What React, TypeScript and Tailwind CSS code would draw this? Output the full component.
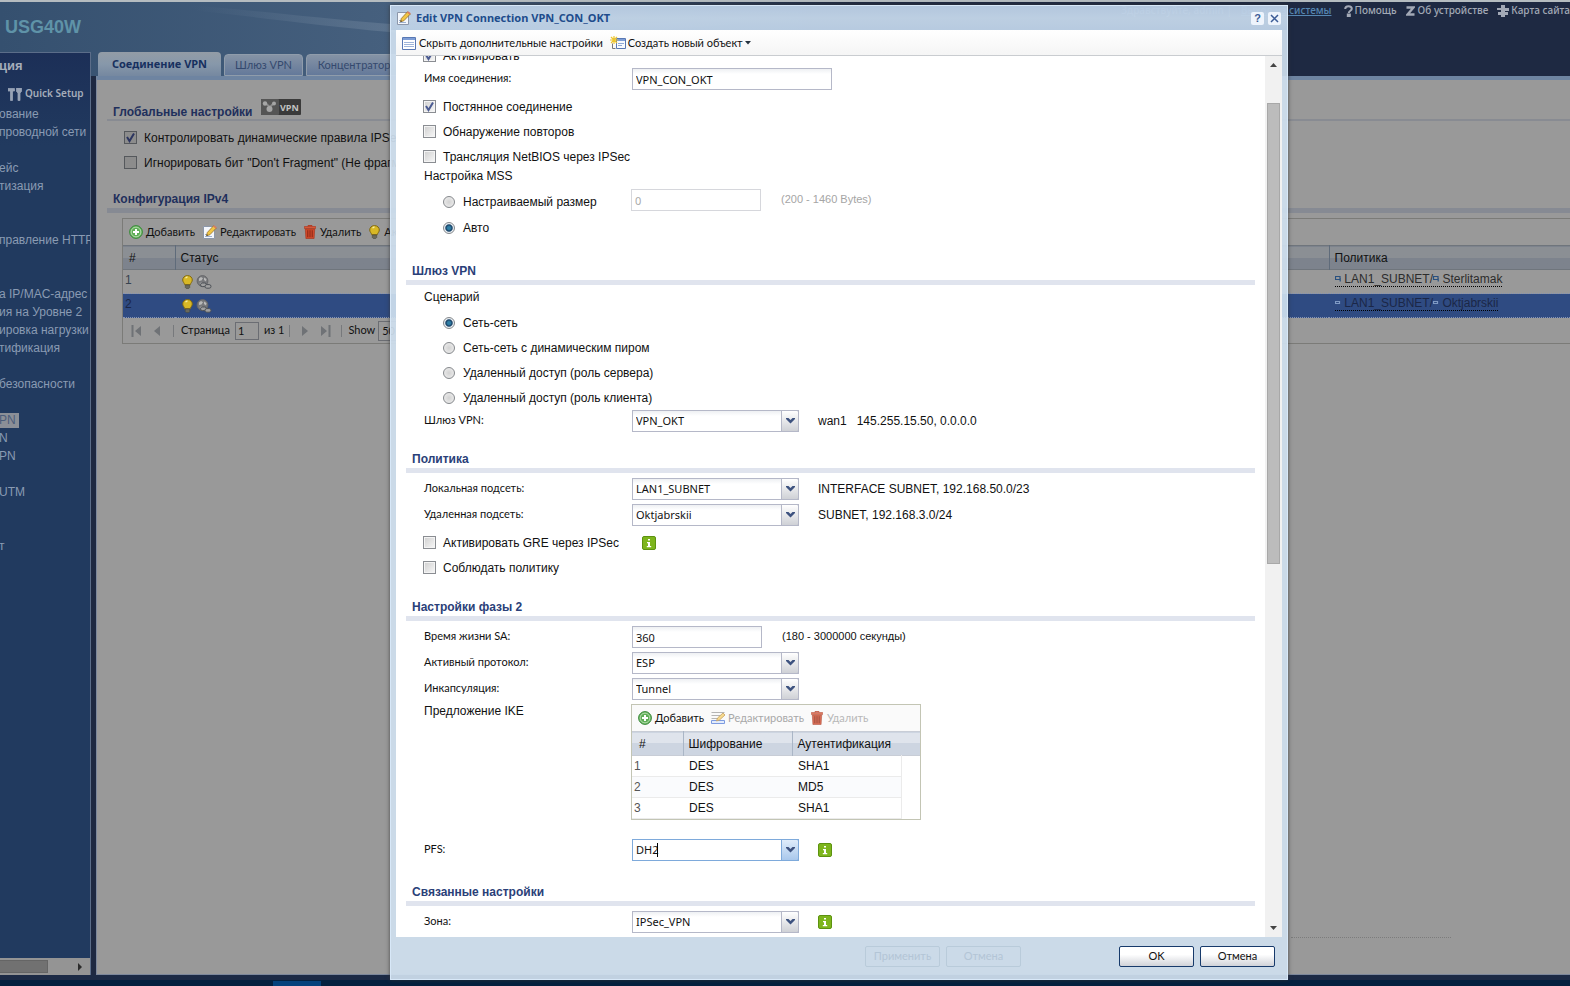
import React from "react";

const caption = "font-['Lato',sans-serif] text-[11px]";
const value = "font-['Noto_Sans',sans-serif] text-[11px]";

const sideItems = [
  "ование", "проводной сети", "", "ейс", "тизация", "", "", "правление HTTP", "", "",
  "а IP/MAC-адрес", "ия на Уровне 2", "ировка нагрузки", "тификация", "", "безопасности",
  "", "PN", "N", "PN", "", "UTM", "", "", "т",
];

function AddIcon() {
  return (
    <svg width="14" height="14" viewBox="0 0 14 14">
      <circle cx="7" cy="7" r="6.4" fill="#5fae57" stroke="#3d8a3d" />
      <circle cx="7" cy="7" r="4.9" fill="none" stroke="#b9e0b2" />
      <path d="M7 4v6M4 7h6" stroke="#fff" strokeWidth="2" />
    </svg>
  );
}

function PencilIcon() {
  return (
    <svg width="14" height="14" viewBox="0 0 14 14">
      <path d="M.5 1.500h11v12H.5z" fill="#f4f7fc" stroke="#8c97aa" />
      <path d="M2 9.500h2M2 11.500h7" stroke="#9db1d0" />
      <path d="M3.500 10.800l.8-3.300L10.500.8l2.800 2.200-6.500 6.800z" fill="#f1c644" stroke="#98702b" strokeWidth=".8" />
      <path d="M3.500 10.800l.4-1.600 1.200 1z" fill="#333" />
      <path d="M10.500.8l2.800 2.200" stroke="#d77c62" strokeWidth="1.600" />
    </svg>
  );
}

function EditRowIcon() {
  return (
    <svg width="15" height="14" viewBox="0 0 15 14">
      <path d="M.5 1.500h13M.5 4.500h9M.5 7.500h7" stroke="#b5b5b5" />
      <path d="M.5 9.500h13v3H.5z" fill="#e3ecfb" stroke="#7d9be0" />
      <path d="M5.500 10l1-3 5.500-5 2 2-5.500 5z" fill="#f6d98c" stroke="#c5a060" strokeWidth=".8" />
    </svg>
  );
}

function TrashIcon() {
  return (
    <svg width="12" height="14" viewBox="0 0 12 14">
      <path d="M4 1.500V.6h4v.9" fill="none" stroke="#b5361c" />
      <path d="M.3 1.500h11.400v2H.3z" fill="#d95638" stroke="#a9361d" strokeWidth=".6" />
      <path d="M1.300 4h9.400l-.6 9.500H1.900z" fill="#d24a2c" stroke="#a2321a" strokeWidth=".6" />
      <path d="M3.800 5.200v7M6 5.200v7M8.200 5.200v7" stroke="#7f2412" strokeWidth=".9" />
    </svg>
  );
}

function BulbIcon() {
  return (
    <svg width="11" height="14" viewBox="0 0 11 14">
      <path d="M5.500.6C2.500.6.7 2.700.7 5c0 2 1.700 2.900 2 4.700h5.600c.3-1.800 2-2.700 2-4.700 0-2.300-1.800-4.400-4.800-4.400z" fill="#d8b826" stroke="#7f6713" />
      <path d="M3.600 3.200C4 2.500 4.700 2.100 5.500 2" stroke="#f7eda0" fill="none" strokeWidth="1.300" />
      <path d="M3.300 10h4.400v2.500l-1 1H4.300l-1-1z" fill="#6a6a5c" stroke="#4b4b40" strokeWidth=".6" />
    </svg>
  );
}

function GlobeLinkIcon() {
  return (
    <svg width="16" height="14" viewBox="0 0 16 14">
      <circle cx="6.500" cy="6" r="5.400" fill="#77787b" stroke="#66676a" />
      <path d="M3 3.500l2-1.500 2 1.200L5.500 5.500 3 6zM8 2.500l2.500 1.500L10 6.500 8 5zM3.500 8l2.500-.5 1 2-1.500 1z" fill="#b9b9b9" />
      <rect x="4.500" y="8" width="6" height="3.600" rx="1.800" fill="#a0a0a0" stroke="#4d5157" />
      <rect x="9" y="9.600" width="6" height="3.600" rx="1.800" fill="#a0a0a0" stroke="#4d5157" />
    </svg>
  );
}

function InfoIcon() {
  return (
    <svg width="14" height="14" viewBox="0 0 14 14">
      <rect x=".5" y=".5" width="13" height="13" rx="1.500" fill="#7db51c" stroke="#5d9210" />
      <path d="M6 3h2v1.600H6zM5 6h3v4h1.200v1.200H4.800V10H6V7.200H5z" fill="#fff" />
    </svg>
  );
}

function HostIcon({ light }: { light?: boolean }) {
  return (
    <svg width="6" height="7" viewBox="0 0 6 7" className="inline">
      <path d={light ? "M.5 1.500h4v2H.5z" : "M.5.5h4.500v3H.5zM5.200 2v3.500"} fill="none" stroke={light ? "#7f9ac4" : "#29507f"} strokeWidth="1.200" />
    </svg>
  );
}

function Check({ label, on, dim }: { label: string; on?: boolean; dim?: boolean }) {
  return (
    <label className="flex h-[25px] items-center gap-[7px] whitespace-nowrap">
      <span className="relative flex">
        <input
          type="checkbox"
          defaultChecked={on}
          className={
            dim
              ? "size-[13px] appearance-none border border-[#55585c] bg-[#8c8c8c]"
              : "size-[13px] appearance-none border border-[#8a8d92] bg-linear-to-br from-[#cfcfcf] to-[#f8f8f8] shadow-[inset_0_0_0_1px_#f4f4f4]"
          }
        />
        {on && (
          <svg className="pointer-events-none absolute inset-0" width="13" height="13" viewBox="0 0 13 13">
            <path d="M3 6l2.500 4L10 2.500" fill="none" stroke={dim ? "#2c3560" : "#4b5b92"} strokeWidth="2" />
          </svg>
        )}
      </span>
      {label}
    </label>
  );
}

function Radio({ name, label, on }: { name: string; label: string; on?: boolean }) {
  return (
    <label className="flex h-[25px] items-center gap-2 pl-5 whitespace-nowrap">
      <input
        type="radio"
        name={name}
        defaultChecked={on}
        className="size-3 appearance-none rounded-full border border-[#85888c] bg-radial from-[#d2d2d2] to-[#f2f2f2] checked:bg-radial checked:from-[#2f7fa6] checked:from-20% checked:via-[#173f63] checked:via-45% checked:to-[#e8eef2] checked:to-60%"
      />
      {label}
    </label>
  );
}

function Section({ title, children, className }: { title: string; children: React.ReactNode; className: string }) {
  return (
    <section className={className}>
      <h2 className="border-b-[5px] border-[#e0e4ee] pl-[6px] leading-[18px] font-bold text-[#2a4078]">{title}</h2>
      <div className="pl-[17px]">{children}</div>
    </section>
  );
}

function Field({ id, label, children }: { id: string; label: string; children: React.ReactNode }) {
  return (
    <div className="flex h-[26px] items-start whitespace-nowrap">
      <label htmlFor={id} className={`${caption} w-[209px] shrink-0 pl-px leading-5`}>
        {label}
      </label>
      {children}
    </div>
  );
}

function Combo({ id, text, focused }: { id: string; text: string; focused?: boolean }) {
  return (
    <span className="relative flex">
      <select
        id={id}
        className={`${value} h-[22px] w-[167px] appearance-none border bg-white pt-px pl-[3px] ${
          focused ? "border-[#7eaadb]" : "border-[#b5b8c8] bg-linear-to-b from-[#eef0f3] to-white to-25%"
        }`}
      >
        <option>{text}</option>
      </select>
      {focused && <span className="absolute top-[4px] left-[25px] h-[14px] w-px bg-black" />}
      <span
        className={`pointer-events-none absolute inset-y-0 right-0 flex w-[18px] items-center justify-center rounded-r-xs border ${
          focused ? "border-[#7eaadb] bg-linear-to-b from-[#dfecfa] to-[#a9c8ec]" : "border-[#b5b8c8] bg-linear-to-b from-white to-[#cfd1d6]"
        }`}
      >
        <svg width="9" height="6" viewBox="0 0 9 6">
          <path d="M0 0h2.500l2 2 2-2H9v1L4.500 5.500 0 1z" fill="#3d527f" />
        </svg>
      </span>
    </span>
  );
}

function TopLinks() {
  return (
    <nav className="flex h-[18px] items-center justify-end gap-[9px] font-['Noto_Sans',sans-serif] text-[10px] font-medium text-[#a3a9b6]">
      <span>Здравствуйте, admin |</span>
      <a href="#logout" className="mr-[3px] text-[#5687b3] underline">
        Выход из системы
      </a>
      <a href="#help" className="flex items-center gap-[2px]">
        <svg width="9" height="12" viewBox="0 0 9 12">
          <path d="M1.200 4C1.200 2 2.500 1.200 4.500 1.200S7.800 2.200 7.800 3.800c0 2-3 2-3 4.200M3.800 9.500h2v2h-2z" fill="none" stroke="currentColor" strokeWidth="2" />
        </svg>
        Помощь
      </a>
      <a href="#about" className="flex items-center gap-[3px]">
        <svg width="9" height="10" viewBox="0 0 9 10">
          <path d="M.5 1.500h7L1.500 8.500h7" fill="none" stroke="currentColor" strokeWidth="2.400" />
        </svg>
        Об устройстве
      </a>
      <a href="#map" className="flex items-center gap-[2px]">
        <svg width="12" height="12" viewBox="0 0 12 12">
          <path d="M4 0h4v3h4v3H8v1h3v3H8v2H4v-2H1V7h3V5H0V3h4z" fill="currentColor" />
        </svg>
        Карта сайта
      </a>
    </nav>
  );
}

function Sidebar() {
  return (
    <aside className="mt-[52px] flex w-[91px] shrink-0 flex-col overflow-hidden border-t border-r border-[#5b6d89] bg-[#213a5f] bg-linear-to-b from-[#1c2f57] to-[#213a5f] to-10% text-[#8a9bb3]">
      <h3 className="-ml-px h-[26px] pt-[3px] text-[13px] leading-5 font-bold text-[#a5adba]">ция</h3>
      <a href="#quick" className="flex h-[26px] items-center gap-[3px] pt-1 pl-2 font-['Noto_Sans',sans-serif] text-[10px] font-semibold whitespace-nowrap text-[#a5adba]">
        <svg width="14" height="14" viewBox="0 0 14 14">
          <path d="M0 1.500h6.500v2.500H0zM2.500 4h2v9.500h-2zM8.500 1v3.500L10 6v7.500h2V6l1.500-1.500V1" fill="#97a2b5" stroke="#97a2b5" strokeWidth=".8" />
        </svg>
        Quick Setup
      </a>
      <ul className="grow whitespace-nowrap">
        {sideItems.map((item, index) => (
          <li key={index} className="-ml-px h-[18px] leading-[18px]">
            <a href="#menu" className={index === 17 ? "bg-[#8b8f97] pr-[3px] pb-px text-[#4c5d7a]" : ""}>
              {item}
            </a>
          </li>
        ))}
      </ul>
      <div className="flex h-[17px] items-center justify-between bg-[#949494] pr-2">
        <span className="h-[13px] w-12 border border-l-0 border-[#656565] bg-[#717171]" />
        <svg width="4" height="8" viewBox="0 0 4 8">
          <path d="M0 0l4 4-4 4z" fill="#2b2b2b" />
        </svg>
      </div>
    </aside>
  );
}

function Pager() {
  return (
    <div className={`${caption} flex h-[26px] items-center gap-[9px] border-b border-[#7b7b78] pl-2 whitespace-nowrap`}>
      <svg width="10" height="12" viewBox="0 0 10 12">
        <path d="M.5 0h2v12h-2zM10 1v10L4 6z" fill="#6f7276" />
      </svg>
      <svg width="14" height="12" viewBox="0 0 14 12">
        <path d="M10 1v10L4 6z" fill="#6f7276" />
      </svg>
      <span className="h-3 w-px bg-[#77797c]" />
      <label className="-ml-[2px] flex items-center gap-[5px]">
        Страница
        <input defaultValue="1" className="h-[18px] w-6 border border-[#6b6d73] pl-[2px]" />
      </label>
      <span className="-ml-1">из 1</span>
      <span className="-ml-1 h-3 w-px bg-[#77797c]" />
      <svg width="12" height="12" viewBox="0 0 12 12">
        <path d="M3 1v10l6-5z" fill="#6f7276" />
      </svg>
      <svg width="12" height="12" viewBox="0 0 12 12">
        <path d="M1 1v10l6-5zM8.500 0h2v12h-2z" fill="#6f7276" />
      </svg>
      <span className="h-3 w-px bg-[#77797c]" />
      <label className="-ml-[3px] flex items-center gap-[3px]">
        Show
        <input defaultValue="50" className="h-5 w-12 border border-[#6b6d73] pl-[3px]" />
      </label>
    </div>
  );
}

function Background() {
  return (
    <div className="flex h-full flex-col">
      <div className="flex min-h-0 grow bg-[#1e2942] bg-[linear-gradient(90deg,#35506f,#46607e_25%,#1e2942_55%)] bg-[length:100%_76px] bg-no-repeat">
        <svg className="pointer-events-none absolute top-[2px] left-0" width="780" height="50" viewBox="0 0 780 50">
          <defs>
            <linearGradient id="swoosh" x1="0" x2="1">
              <stop offset="0.15" stopColor="#7b8fa5" stopOpacity="0" />
              <stop offset="0.5" stopColor="#7b8fa5" stopOpacity=".5" />
              <stop offset="1" stopColor="#7b8fa5" stopOpacity="0" />
            </linearGradient>
          </defs>
          <path d="M120 0c90 2 170 14 270 22 130 8 250 2 390-10v6c-150 14-260 20-390 12-110-10-190-24-300-30z" fill="url(#swoosh)" />
        </svg>
        <Sidebar />
        <main className="ml-[5px] flex min-w-0 grow flex-col">
          <div className="flex h-[76px] shrink-0 items-end gap-[3px] pl-[2px] whitespace-nowrap">
            <button className={`${value} h-6 w-[123px] rounded-t-sm bg-linear-to-b from-[#939ca6] via-[#8798aa] to-[#7588a0] font-bold text-[#17305f]`}>
              Соединение VPN
            </button>
            <button className={`${caption} h-[22px] w-[79px] rounded-t-sm border border-[#8f9cab] bg-linear-to-b from-[#8593a5] to-[#64799a] text-[#34496e]`}>
              Шлюз VPN
            </button>
            <button className={`${caption} h-[22px] w-24 rounded-t-sm border border-[#8f9cab] bg-linear-to-b from-[#8593a5] to-[#64799a] text-[#34496e]`}>
              Концентратор
            </button>
          </div>
          <div className="grow border-t-4 border-b border-l border-t-[#6e84a1] border-b-[#7c879b] border-l-[#7c879b] bg-[#999]">
            <h2 className="mt-[19px] ml-[10px] flex h-[22px] items-center gap-[9px] border-b-2 border-[#888b92] pl-[6px] font-bold text-[#1f2f5c]">
              <span className="pt-[6px]">Глобальные настройки</span>
              <svg width="40" height="16" viewBox="0 0 40 16" className="-mt-1">
                <rect width="40" height="16" rx="1" fill="#3a3a3a" />
                <rect width="18" height="16" rx="1" fill="#555" />
                <path d="M4 4l5 4 4-4M8.500 8v3" stroke="#8b8b8b" strokeWidth="2" fill="none" />
                <circle cx="4" cy="4.500" r="2.200" fill="#a5a5a5" />
                <circle cx="13" cy="4.500" r="2" fill="#a5a5a5" />
                <circle cx="8.500" cy="10" r="3" fill="#a5a5a5" />
                <text x="19" y="12" fontSize="9" fontWeight="bold" fontFamily="Open Sans" fill="#c2c2c2">VPN</text>
              </svg>
            </h2>
            <div className="mt-1 pl-[27px]">
              <Check label="Контролировать динамические правила IPSec" on dim />
              <Check label={'Игнорировать бит "Don\'t Fragment" (Не фрагментировать)'} dim />
            </div>
            <h2 className="mt-[15px] ml-[10px] border-b-[5px] border-[#868a93] pl-[6px] leading-[18px] font-bold text-[#1f2f5c]">
              Конфигурация IPv4
            </h2>
            <div className="mt-[5px] ml-[25px] border-t border-l border-[#7b7b78]">
              <div className={`${caption} flex h-[26px] items-center gap-2 pl-[6px] whitespace-nowrap`}>
                <button className="flex items-center gap-[3px]"><AddIcon />Добавить</button>
                <button className="flex items-center gap-[3px]"><PencilIcon />Редактировать</button>
                <button className="flex items-center gap-1"><TrashIcon />Удалить</button>
                <button className="flex items-center gap-1"><BulbIcon />Активировать</button>
              </div>
              <table className="w-full table-fixed text-left">
                <colgroup>
                  <col className="w-[52px]" />
                  <col />
                  <col className="w-[241px]" />
                </colgroup>
                <thead>
                  <tr className="h-6 border-y border-[#6f757c] bg-linear-to-b from-[#8b8f94] from-50% to-[#7d838d] to-50%">
                    <th className="pl-[6px] font-normal">#</th>
                    <th className="border-l border-[#5f6b7a] pl-[5px] font-normal">Статус</th>
                    <th className="border-l border-[#5f6b7a] pl-[5px] font-normal">Политика</th>
                  </tr>
                </thead>
                <tbody>
                  {["Sterlitamak", "Oktjabrskii"].map((name, index) => (
                    <tr
                      key={name}
                      className={index ? "h-6 border-y border-dotted border-[#8493b5] bg-[#2f4b82] text-[#1b2747]" : "h-6 text-[#2c2c2c]"}
                    >
                      <td className={index ? "pl-[2px] align-top leading-5 text-[#1b2747]" : "pl-[2px] align-top leading-5 text-[#37424f]"}>
                        {index + 1}
                      </td>
                      <td className="pl-[7px]">
                        <span className="flex gap-[3px]"><BulbIcon /><GlobeLinkIcon /></span>
                      </td>
                      <td className="pl-[6px] align-top leading-[19px]">
                        <span className="border-b border-dotted border-black">
                          <HostIcon light={index === 1} /> LAN1_SUBNET/<HostIcon light={index === 1} /> {name}
                        </span>
                      </td>
                    </tr>
                  ))}
                </tbody>
              </table>
              <Pager />
            </div>
          </div>
        </main>
      </div>
      <div className="h-[5px] bg-[#1c2a45]" />
      <div className="flex h-[6px] items-end bg-[#04213f] pl-[273px]">
        <span className="h-[5px] w-12 bg-[#05427c]" />
      </div>
    </div>
  );
}

function Proposals() {
  return (
    <div className="w-[290px] border border-[#c3c5b4]">
      <div className={`${caption} flex h-[26px] items-center gap-[7px] bg-[#fafafa] pl-[6px] whitespace-nowrap`}>
        <button className="flex items-center gap-[3px]"><AddIcon />Добавить</button>
        <button disabled className="flex items-center gap-[2px] text-[#a8a8a8]"><EditRowIcon />Редактировать</button>
        <button disabled className="flex items-center gap-1 text-[#a8a8a8] opacity-80"><TrashIcon />Удалить</button>
      </div>
      <table className="w-full table-fixed text-left">
        <colgroup>
          <col className="w-[51px]" />
          <col className="w-[109px]" />
          <col className="w-[109px]" />
          <col />
        </colgroup>
        <thead>
          <tr className="h-6 border-y border-[#c8cdd6] bg-linear-to-b from-[#dfe4ec] from-45% to-[#cdd5e1] to-45%">
            <th className="pl-[7px] font-normal">#</th>
            <th className="border-l border-[#aab6c6] pl-[5px] font-normal">Шифрование</th>
            <th colSpan={2} className="border-l border-[#aab6c6] pl-[5px] font-normal">Аутентификация</th>
          </tr>
        </thead>
        <tbody>
          {["SHA1", "MD5", "SHA1"].map((auth, index) => (
            <tr key={index} className="h-[21px] even:bg-[#fafbfd]">
              <td className="border-b border-[#ebebeb] pl-[2px] text-[#555]">{index + 1}</td>
              <td className="border-b border-[#ebebeb] pl-[6px]">DES</td>
              <td className="border-r border-b border-[#ebebeb] pl-[6px]">{auth}</td>
              <td className="bg-white" />
            </tr>
          ))}
        </tbody>
      </table>
    </div>
  );
}

function Form() {
  return (
    <div className="-mt-[13px] grow pr-[10px] pl-[10px]">
      <div className="pl-[17px]">
        <Check label="Активировать" on />
        <Field id="name" label="Имя соединения:">
          <input id="name" defaultValue="VPN_CON_OKT" className={`${value} h-[22px] w-[200px] border border-[#b5b8c8] bg-linear-to-b from-[#eef0f3] to-white to-25% pt-px pl-[3px]`} />
        </Field>
        <Check label="Постянное соединение" on />
        <Check label="Обнаружение повторов" />
        <Check label="Трансляция NetBIOS через IPSec" />
        <p className="h-5 pl-px leading-[14px]">Настройка MSS</p>
        <div className="flex h-[26px] whitespace-nowrap">
          <div className="w-[208px]">
            <Radio name="mss" label="Настраиваемый размер" />
          </div>
          <input disabled aria-label="MSS" defaultValue="0" className={`${value} h-[22px] w-[130px] border border-[#d6d7dc] pt-px pl-[3px] text-[#aaa]`} />
          <span className="pl-5 text-[11px] leading-5 text-[#a5a5a5]">(200 - 1460 Bytes)</span>
        </div>
        <Radio name="mss" label="Авто" on />
      </div>
      <Section title="Шлюз VPN" className="mt-[22px]">
        <p className="pl-px leading-[25px]">Сценарий</p>
        <Radio name="scenario" label="Сеть-сеть" on />
        <Radio name="scenario" label="Сеть-сеть с динамическим пиром" />
        <Radio name="scenario" label="Удаленный доступ (роль сервера)" />
        <Radio name="scenario" label="Удаленный доступ (роль клиента)" />
        <Field id="gateway" label="Шлюз VPN:">
          <Combo id="gateway" text="VPN_OKT" />
          <span className="pl-[19px] leading-[22px] whitespace-pre">{"wan1   145.255.15.50, 0.0.0.0"}</span>
        </Field>
      </Section>
      <Section title="Политика" className="mt-[14px]">
        <div className="pt-[5px]">
          <Field id="local" label="Локальная подсеть:">
            <Combo id="local" text="LAN1_SUBNET" />
            <span className="pl-[19px] leading-[22px]">INTERFACE SUBNET, 192.168.50.0/23</span>
          </Field>
          <Field id="remote" label="Удаленная подсеть:">
            <Combo id="remote" text="Oktjabrskii" />
            <span className="pl-[19px] leading-[22px]">SUBNET, 192.168.3.0/24</span>
          </Field>
          <div className="flex items-center">
            <div className="w-[219px]">
              <Check label="Активировать GRE через IPSec" />
            </div>
            <InfoIcon />
          </div>
          <Check label="Соблюдать политику" />
        </div>
      </Section>
      <Section title="Настройки фазы 2" className="mt-[18px]">
        <div className="pt-[5px]">
          <Field id="life" label="Время жизни SA:">
            <input id="life" defaultValue="360" className={`${value} h-[22px] w-[130px] border border-[#b5b8c8] bg-linear-to-b from-[#eef0f3] to-white to-25% pt-px pl-[3px]`} />
            <span className="pl-5 text-[11px] leading-5">(180 - 3000000 секунды)</span>
          </Field>
          <Field id="proto" label="Активный протокол:">
            <Combo id="proto" text="ESP" />
          </Field>
          <Field id="encap" label="Инкапсуляция:">
            <Combo id="encap" text="Tunnel" />
          </Field>
          <div className="mb-[19px] flex">
            <p className="w-[208px] pl-px leading-[14px]">Предложение IKE</p>
            <Proposals />
          </div>
          <Field id="pfs" label="PFS:">
            <Combo id="pfs" text="DH2" focused />
            <span className="pt-1 pl-[19px]"><InfoIcon /></span>
          </Field>
        </div>
      </Section>
      <Section title="Связанные настройки" className="mt-[18px]">
        <div className="pt-[5px]">
          <Field id="zone" label="Зона:">
            <Combo id="zone" text="IPSec_VPN" />
            <span className="pt-1 pl-[19px]"><InfoIcon /></span>
          </Field>
        </div>
      </Section>
    </div>
  );
}

function Dialog() {
  return (
    <div
      role="dialog"
      aria-label="Edit VPN Connection"
      className="absolute top-[5px] right-[282px] bottom-[6px] left-[390px] flex flex-col border border-[#d8e8f8] bg-[#cfe0ef]/92 px-[5px] shadow-[0_0_4px_#333c]"
    >
      <div className="-mx-[5px] flex h-6 shrink-0 items-center gap-[5px] bg-linear-to-b from-[#a9bfdb]/60 via-[#b9cde2]/60 to-[#b0c6df]/60 px-[6px]">
        <PencilIcon />
        <h1 className="grow font-['Noto_Sans',sans-serif] text-[11px] font-bold text-[#204c8c]">Edit VPN Connection VPN_CON_OKT</h1>
        <button aria-label="Help" className="flex size-[13px] items-center justify-center rounded-xs bg-[#eef4fc] text-[11px] font-bold text-[#3c5c96]">?</button>
        <button aria-label="Close" className="-ml-px flex size-[13px] items-center justify-center rounded-xs bg-[#eef4fc]">
          <svg width="9" height="9" viewBox="0 0 9 9">
            <path d="M1 1l7 7M8 1L1 8" stroke="#3c5c96" strokeWidth="1.500" />
          </svg>
        </button>
      </div>
      <div className={`${caption} flex h-[26px] shrink-0 items-center gap-[7px] border-b border-[#c9ccd0] bg-linear-to-b from-white to-[#f5f5f5] pt-px pl-[6px] whitespace-nowrap`}>
        <button className="flex items-center gap-[3px]">
          <svg width="14" height="13" viewBox="0 0 14 13">
            <path d="M.5.5h13v12H.5z" fill="#fff" stroke="#5878b4" />
            <path d="M1 1h12v2H1z" fill="#7d9dd6" />
            <path d="M2 5.500h10M2 7.500h10M2 9.500h10" stroke="#9fb5da" />
          </svg>
          Скрыть дополнительные настройки
        </button>
        <button className="flex items-center gap-[2px]">
          <svg width="16" height="14" viewBox="0 0 16 14">
            <path d="M6.500 2.500h9v10h-9z" fill="#f7faff" stroke="#5878b4" />
            <path d="M7 3h8v2H7z" fill="#7d9dd6" />
            <path d="M8 7.500h6M8 9.500h4" stroke="#8fa8d5" />
            <path d="M2.500 7.500v5h3" fill="none" stroke="#777" />
            <path d="M4 0v8M0 4h8M1 1l6 6M7 1L1 7" stroke="#edc52e" strokeWidth="1.200" />
          </svg>
          Создать новый объект
          <svg width="6" height="4" viewBox="0 0 6 4">
            <path d="M0 0h6L3 3.500z" fill="#26323f" />
          </svg>
        </button>
      </div>
      <div className="flex min-h-0 grow overflow-hidden bg-white">
        <Form />
        <div className="flex w-[17px] flex-col items-center bg-[#f1f1f1] py-[7px]">
          <svg width="7" height="4" viewBox="0 0 7 4">
            <path d="M0 4h7L3.500 0z" fill="#444" />
          </svg>
          <div className="mt-9 h-[461px] w-[13px] border border-[#a8a8a8] bg-[#bcbcbc]" />
          <svg width="7" height="4" viewBox="0 0 7 4" className="mt-auto">
            <path d="M0 0h7L3.500 4z" fill="#444" />
          </svg>
        </div>
      </div>
      <div className={`${caption} flex h-[42px] shrink-0 items-start gap-[6px] pt-[9px] pr-[7px]`}>
        <button disabled className="ml-auto h-[21px] w-[75px] rounded-xs border border-[#b9cbda] text-[#b3c5d6]">Применить</button>
        <button disabled className="mr-[92px] h-[21px] w-[75px] rounded-xs border border-[#b9cbda] text-[#b3c5d6]">Отмена</button>
        <button className="h-[21px] w-[75px] rounded-xs border border-[#173a6b] bg-linear-to-b from-white from-40% to-[#d0d2d8]">OK</button>
        <button className="h-[21px] w-[75px] rounded-xs border border-[#173a6b] bg-linear-to-b from-white from-40% to-[#d0d2d8]">Отмена</button>
      </div>
    </div>
  );
}

export default function App() {
  return (
    <div className="relative h-screen overflow-hidden font-['Liberation_Sans',sans-serif] text-xs text-[#111]">
      <Background />
      <div className="absolute inset-x-0 top-0 h-[2px] bg-[#b5bcc0]" />
      <div className="absolute top-[2px] right-0">
        <TopLinks />
      </div>
      <div className="absolute top-[13px] left-[5px] text-lg font-bold text-[#5f93a8]">USG40W</div>
      <div className="absolute right-[119px] bottom-12 w-40 border-b border-dotted border-[#7c7c7c]" />
      <Dialog />
    </div>
  );
}
